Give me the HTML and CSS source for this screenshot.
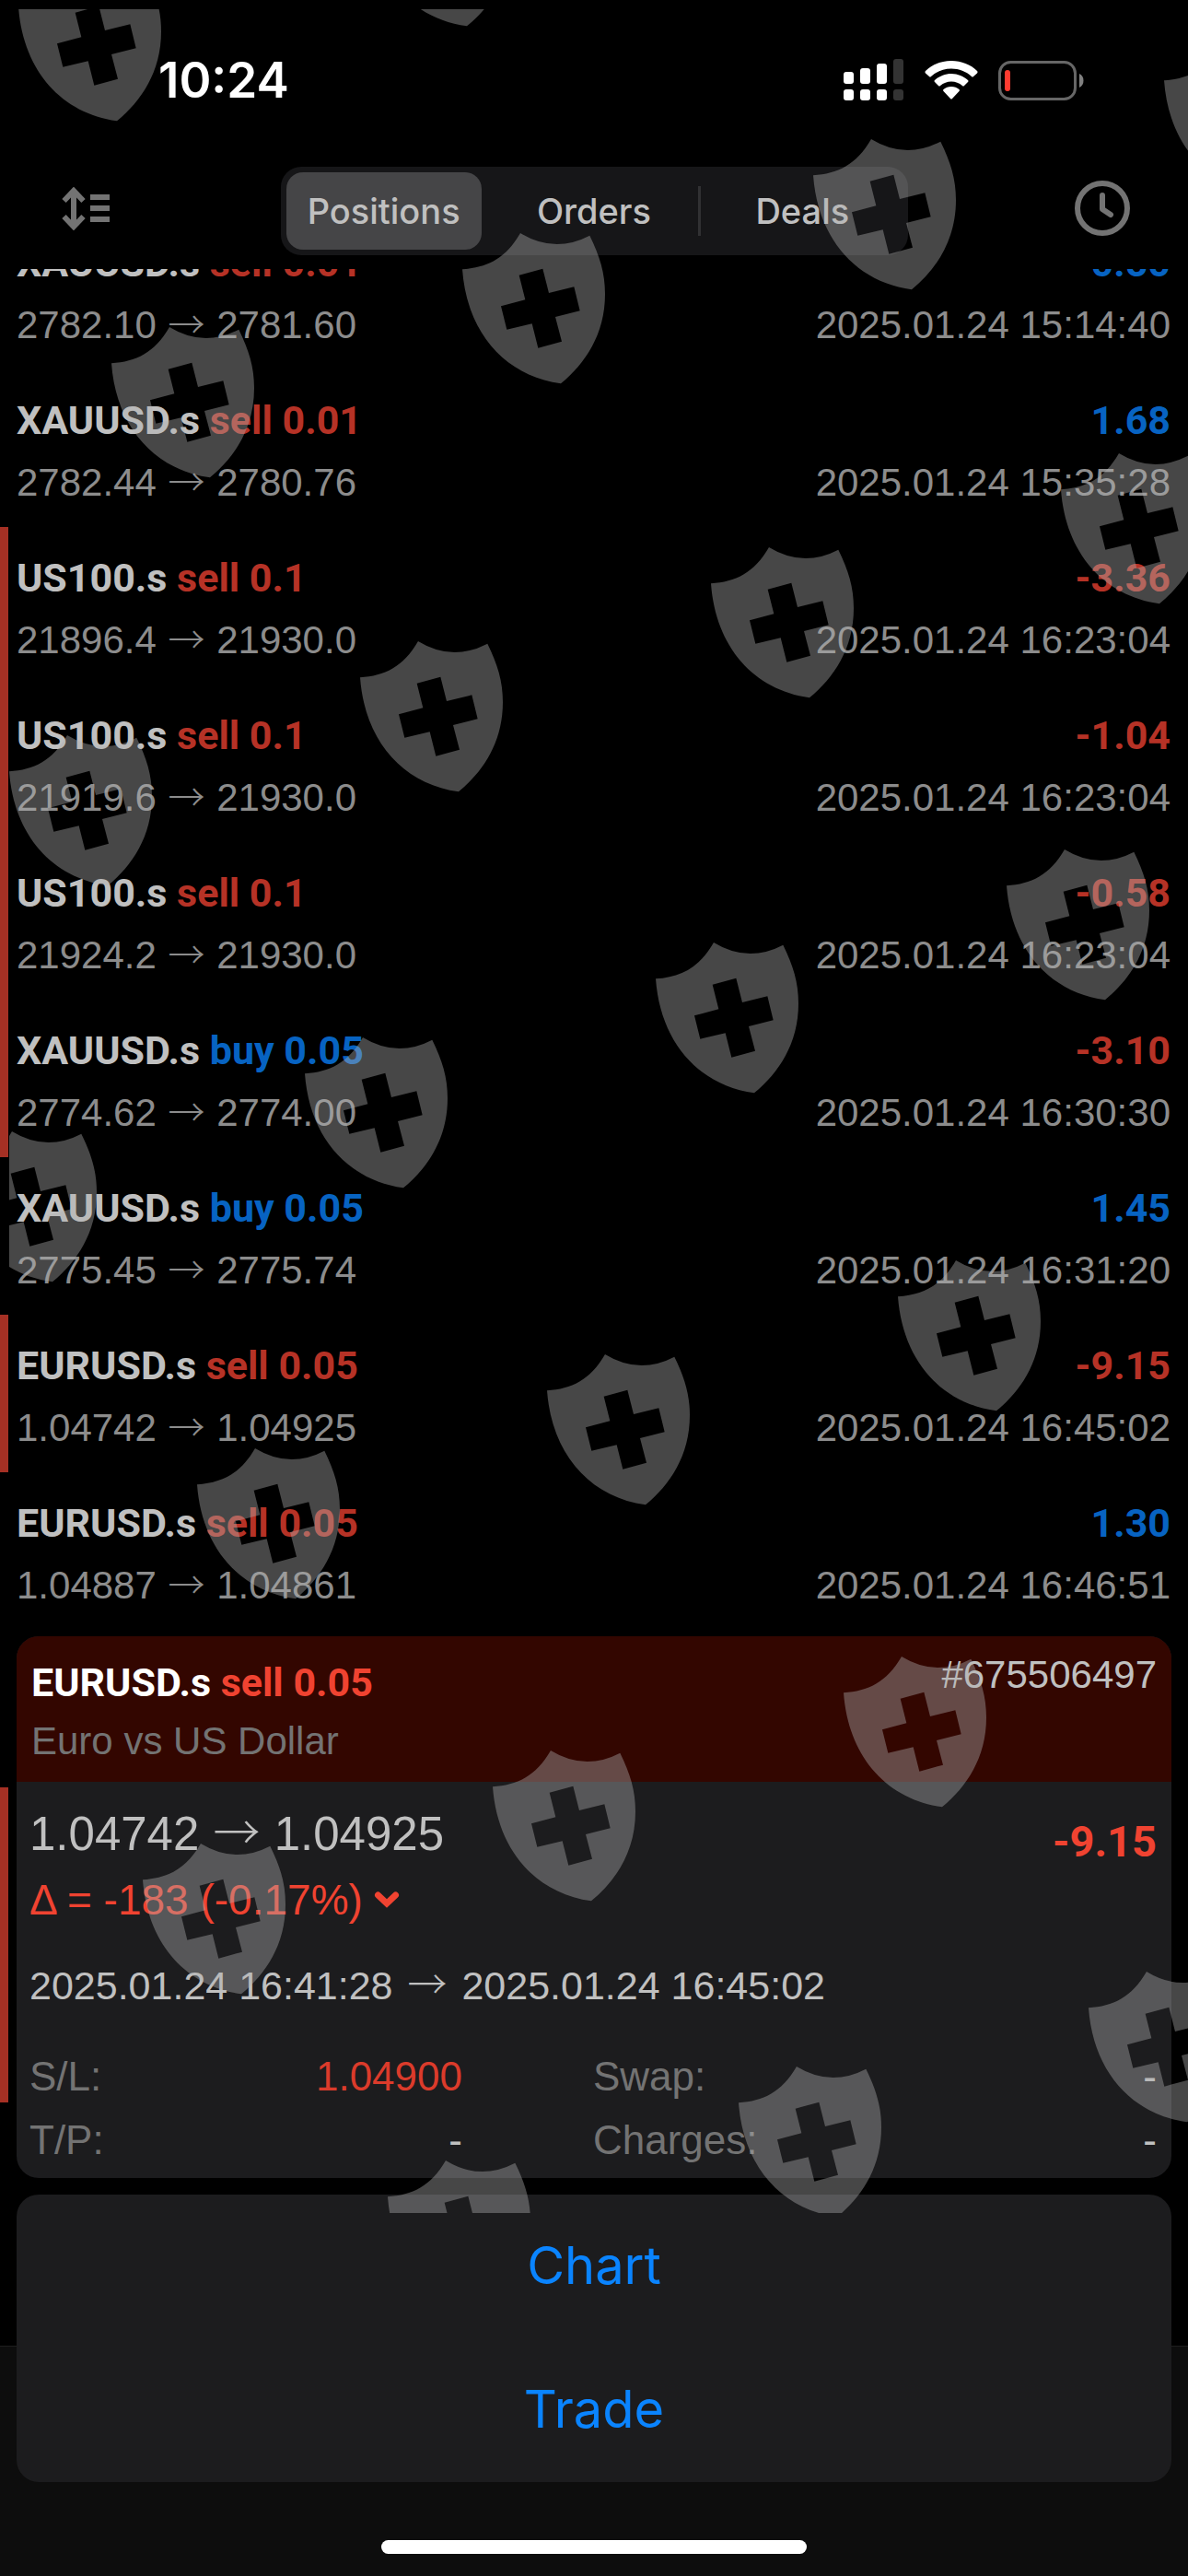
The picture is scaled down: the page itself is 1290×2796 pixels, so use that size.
FILE: index.html
```
<!DOCTYPE html>
<html lang="en">
    <head>
        <meta charset="UTF-8" />
        <meta name="viewport" content="width=device-width, initial-scale=1.0" />
        <title>Positions</title>
        <link rel="stylesheet" href="styles.css">
    </head>
    <body>
        <div class="screen">
            <header class="statusBar">
                <span class="time">10:24</span>
                <div class="statusIcons">
                    <svg width="66" height="46" viewBox="0 0 66 46" fill="#fff">
                        <rect x="0" y="14" width="11" height="13" rx="3" />
                        <rect x="18" y="10" width="11" height="17" rx="3" />
                        <rect x="36" y="5" width="11" height="22" rx="3" />
                        <rect x="54" y="0" width="11" height="27" rx="3" fill="#333" />
                        <rect x="0" y="33" width="11" height="12" rx="3" />
                        <rect x="18" y="33" width="11" height="12" rx="3" />
                        <rect x="36" y="33" width="11" height="12" rx="3" />
                        <rect x="54" y="33" width="11" height="12" rx="3" fill="#333" />
                    </svg>
                    <svg width="58" height="42" viewBox="0 0 58 42" fill="#fff">
                        <path d="M29 0C40 0 50 4 57 11Q58 12 57 13.5L53 17Q52 18 51 17C45 11.5 37.5 8.5 29 8.5S13 11.5 7 17Q6 18 5 17L1 13.5Q0 12 1 11C8 4 18 0 29 0Z" />
                        <path d="M29 14C36 14 42.5 17 47 21Q48 22 47 23L43 27Q42 28 41 27C37.5 24 33.5 22.5 29 22.5S20.5 24 17 27Q16 28 15 27L11 23Q10 22 11 21C15.5 17 22 14 29 14Z" />
                        <path d="M29 28C32.5 28 35 29 37.5 31Q38.5 32 37.5 33L30 41Q29 42 28 41L20.5 33Q19.5 32 20.5 31C23 29 25.5 28 29 28Z" />
                    </svg>
                    <svg width="94" height="43" viewBox="0 0 94 43">
                        <rect x="1.5" y="1.5" width="82" height="40" rx="12" fill="none" stroke="#666" stroke-width="3" />
                        <rect x="7" y="10" width="6" height="23" rx="3" fill="#ff3b30" />
                        <path d="M88 14C94 16 94 27 88 29Z" fill="#808080" />
                    </svg>
                </div>
            </header>

            <nav class="toolbar">
                <button class="iconButton" aria-label="Sort">
                    <svg width="53" height="47" viewBox="0 0 53 47" fill="none" stroke="#737373" stroke-width="6">
                        <path d="M13 4V43M2.5 15L13 4L23.5 15M2.5 32L13 43L23.5 32" />
                        <path d="M31 11H52M31 23H52M31 35H52" />
                    </svg>
                </button>
                <div class="tabs" role="tablist">
                    <button class="tab active" role="tab" aria-selected="true">Positions</button>
                    <button class="tab" role="tab">Orders</button>
                    <button class="tab divided" role="tab">Deals</button>
                </div>
                <button class="iconButton" aria-label="History">
                    <svg width="60" height="60" viewBox="0 0 60 60" fill="none" stroke="#737373" stroke-width="6">
                        <circle cx="30" cy="30" r="27" />
                        <path d="M30 16V31L39 37" stroke-linecap="round" stroke-linejoin="round" />
                    </svg>
                </button>
            </nav>

            <main class="list">
                <div class="row">
                    <div class="line"><b>XAUUSD.s <span class="sell">sell 0.01</span></b><b class="buy">0.50</b></div>
                    <div class="line sub"><span>2782.10 <i>→</i> 2781.60</span><span>2025.01.24 15:14:40</span></div>
                </div>
                <div class="row">
                    <div class="line"><b>XAUUSD.s <span class="sell">sell 0.01</span></b><b class="buy">1.68</b></div>
                    <div class="line sub"><span>2782.44 <i>→</i> 2780.76</span><span>2025.01.24 15:35:28</span></div>
                </div>
                <div class="row stopped">
                    <div class="line"><b>US100.s <span class="sell">sell 0.1</span></b><b class="sell">-3.36</b></div>
                    <div class="line sub"><span>21896.4 <i>→</i> 21930.0</span><span>2025.01.24 16:23:04</span></div>
                </div>
                <div class="row stopped">
                    <div class="line"><b>US100.s <span class="sell">sell 0.1</span></b><b class="sell">-1.04</b></div>
                    <div class="line sub"><span>21919.6 <i>→</i> 21930.0</span><span>2025.01.24 16:23:04</span></div>
                </div>
                <div class="row stopped">
                    <div class="line"><b>US100.s <span class="sell">sell 0.1</span></b><b class="sell">-0.58</b></div>
                    <div class="line sub"><span>21924.2 <i>→</i> 21930.0</span><span>2025.01.24 16:23:04</span></div>
                </div>
                <div class="row stopped">
                    <div class="line"><b>XAUUSD.s <span class="buy">buy 0.05</span></b><b class="sell">-3.10</b></div>
                    <div class="line sub"><span>2774.62 <i>→</i> 2774.00</span><span>2025.01.24 16:30:30</span></div>
                </div>
                <div class="row">
                    <div class="line"><b>XAUUSD.s <span class="buy">buy 0.05</span></b><b class="buy">1.45</b></div>
                    <div class="line sub"><span>2775.45 <i>→</i> 2775.74</span><span>2025.01.24 16:31:20</span></div>
                </div>
                <div class="row stopped">
                    <div class="line"><b>EURUSD.s <span class="sell">sell 0.05</span></b><b class="sell">-9.15</b></div>
                    <div class="line sub"><span>1.04742 <i>→</i> 1.04925</span><span>2025.01.24 16:45:02</span></div>
                </div>
                <div class="row">
                    <div class="line"><b>EURUSD.s <span class="sell">sell 0.05</span></b><b class="buy">1.30</b></div>
                    <div class="line sub"><span>1.04887 <i>→</i> 1.04861</span><span>2025.01.24 16:46:51</span></div>
                </div>
                <div class="row"></div>
                <div class="row stopped"></div>
                <div class="row stopped"></div>
            </main>
            <footer class="bottomBar"></footer>

            <div class="sheet">
                <section class="card">
                    <div class="cardHead">
                        <div>
                            <h2>EURUSD.s <span>sell 0.05</span></h2>
                            <p>Euro vs US Dollar</p>
                        </div>
                        <span class="ticket">#675506497</span>
                    </div>
                    <div class="cardBody">
                        <div class="priceLine">
                            <span class="price">1.04742 <i>→</i> 1.04925</span>
                            <b>-9.15</b>
                        </div>
                        <button class="delta">
                            Δ = -183 (-0.17%)
                            <svg width="28" height="20" viewBox="0 0 28 20" fill="none" stroke="#f04331" stroke-width="7" stroke-linecap="round">
                                <path d="M4.5 5L14 14L23.5 5" />
                            </svg>
                        </button>
                        <p class="period">2025.01.24 16:41:28 <i>→</i> 2025.01.24 16:45:02</p>
                        <dl class="facts">
                            <div><dt>S/L:</dt><dd class="hit">1.04900</dd></div>
                            <div><dt>Swap:</dt><dd>-</dd></div>
                            <div><dt>T/P:</dt><dd>-</dd></div>
                            <div><dt>Charges:</dt><dd>-</dd></div>
                        </dl>
                    </div>
                </section>
                <div class="actions">
                    <button>Chart</button>
                    <button>Trade</button>
                </div>
                <div class="homeIndicator"></div>
            </div>

            <svg class="shields" aria-hidden="true">
                <defs>
                    <path id="shield" transform="scale(0.33333)" fill-rule="evenodd" d="M0 118C80 112 140 85 189 0Q300 68 415 8C448 75 465 130 465 198C465 330 400 425 321 490C140 465 15 325 0 118ZM185 137L262 116L282 195L364 175L383 253L303 273L324 353L247 374L227 295L145 314L126 238L205 217Z" />
                </defs>
                <use href="#shield" x="10" y="-42" />
                <use href="#shield" x="390" y="-145" />
                <use href="#shield" x="1254" y="38" />
                <use href="#shield" x="873" y="141" />
                <use href="#shield" x="492" y="243" />
                <use href="#shield" x="111" y="345" />
                <use href="#shield" x="1142" y="482" />
                <use href="#shield" x="762" y="584" />
                <use href="#shield" x="381" y="686" />
                <use href="#shield" x="0" y="788" />
                <use href="#shield" x="1083" y="912" />
                <use href="#shield" x="702" y="1013" />
                <use href="#shield" x="321" y="1116" />
                <use href="#shield" x="-60" y="1218" />
                <use href="#shield" x="965" y="1358" />
                <use href="#shield" x="584" y="1460" />
                <use href="#shield" x="204" y="1562" />
                <use href="#shield" x="906" y="1788" />
                <use href="#shield" x="525" y="1890" />
                <use href="#shield" x="145" y="1991" />
                <use href="#shield" x="1172" y="2130" />
                <use href="#shield" x="792" y="2233" />
                <use href="#shield" x="411" y="2335" />
            </svg>
        </div>
    </body>
</html>
```
FILE: styles.css
```
* {
    box-sizing: border-box;
}
body {
    margin: 0;
    background-color: #000;
    color: #c0c0c0;
    font-family: "Liberation Sans", Arial, sans-serif;
    font-size: 42px;
}
h2, p, dl, dd {
    margin: 0;
}
button {
    border: 0;
    padding: 0;
    background: none;
    color: inherit;
    font-family: Inter, sans-serif;
}
svg {
    display: block;
}
i {
    margin: 0 1px;
    font-family: "Noto Sans CJK JP", sans-serif;
    font-style: normal;
    font-weight: 300;
    line-height: 1;
}
b, h2 {
    font-family: Roboto, sans-serif;
    font-size: 43px;
    font-weight: bold;
}
.screen {
    position: relative;
    display: flex;
    flex-direction: column;
    min-height: 100vh;
    overflow: hidden;
}

/* status bar */
.statusBar {
    display: flex;
    justify-content: space-between;
    align-items: center;
    height: 174px;
    padding: 0 112px 0 172px;
}
.time {
    color: #fff;
    font-family: Inter, sans-serif;
    font-size: 53px;
    font-weight: 600;
}
.statusIcons {
    display: flex;
    align-items: center;
    gap: 22px;
}

/* toolbar */
.toolbar {
    display: flex;
    justify-content: space-between;
    align-items: flex-start;
    height: 118px;
    padding: 7px 63px 0;
}
.iconButton {
    width: 60px;
    height: 90px;
}
.iconButton svg {
    margin: 0 auto;
}
.tabs {
    display: grid;
    grid-template-columns: 1fr 1fr 1fr;
    gap: 10px;
    width: 681px;
    height: 96px;
    padding: 6px;
    border-radius: 22px;
    background-color: #161618;
}
.tab {
    position: relative;
    font-size: 38px;
    font-weight: 500;
    border-radius: 18px;
}
.tab.active {
    margin-right: 4px;
    background-color: #454547;
}
.tab.divided::before {
    content: "";
    position: absolute;
    left: -5px;
    top: 15px;
    bottom: 15px;
    width: 3px;
    background-color: #313133;
}

/* closed positions, scrolled part of a row under the toolbar */
.list {
    display: flex;
    flex: 1;
    flex-direction: column;
    height: 0;
    overflow: hidden;
}
.row {
    flex: none;
    height: 171px;
    padding: 21px 19px 0 9px;
    border-left: 9px solid transparent;
}
.row:first-child {
    margin-top: -62px;
}
.row.stopped {
    border-left-color: #a53024;
}
.line {
    display: flex;
    justify-content: space-between;
    line-height: 68px;
}
.line i {
    font-size: 40px;
}
.sub {
    color: #8c8c8c;
}
.sell {
    color: #b63226;
}
.buy {
    color: #0763c2;
}
.bottomBar {
    height: 250px;
    border-top: 1px solid #1f1f1f;
    background-color: #0d0d0d;
}

/* detail sheet over the list */
.sheet {
    position: absolute;
    inset: auto 0 0;
    display: flex;
    flex-direction: column;
    gap: 18px;
    padding: 0 18px 24px;
}
.card, .actions {
    border-radius: 24px;
    background-color: #1c1c1e;
    overflow: hidden;
}
.cardHead {
    display: flex;
    justify-content: space-between;
    height: 158px;
    padding: 18px 16px 0;
    background-color: #330600;
}
.cardHead h2 {
    color: #fff;
    line-height: 64px;
}
.cardHead h2 span, .priceLine b, .delta {
    color: #f04331;
}
.cardHead p {
    color: #737373;
    line-height: 64px;
}
.ticket {
    line-height: 48px;
}
.cardBody {
    height: 430px;
    padding: 25px 16px 0 14px;
}
.priceLine {
    display: flex;
    justify-content: space-between;
    line-height: 64px;
}
.price {
    font-size: 51px;
}
.priceLine b {
    padding-top: 8px;
    font-size: 47px;
}
.delta {
    display: flex;
    align-items: center;
    gap: 12px;
    height: 62px;
    font-family: inherit;
    font-size: 46px;
}
.period {
    padding-top: 20px;
    font-size: 43px;
    line-height: 84px;
}
.period i {
    margin: 0 4px;
}
.facts {
    display: grid;
    grid-template-columns: 1fr 1fr;
    padding-top: 22px;
    font-size: 44px;
    line-height: 69px;
}
.facts div {
    display: flex;
    justify-content: space-between;
}
.facts div:nth-child(odd) {
    padding-right: 142px;
}
dt {
    color: #737373;
}
.hit {
    color: #db3b2b;
}
.actions {
    display: flex;
    flex-direction: column;
}
.actions button {
    height: 156px;
    padding-bottom: 2px;
    color: #0a84ff;
    font-size: 56px;
}
.homeIndicator {
    width: 462px;
    height: 15px;
    margin: 45px auto 0;
    border-radius: 8px;
    background-color: #fff;
}

.shields {
    position: absolute;
    top: 10px;
    left: 10px;
    width: 100%;
    height: 2392px;
    fill: rgba(178, 178, 178, 0.4);
    pointer-events: none;
}
```
